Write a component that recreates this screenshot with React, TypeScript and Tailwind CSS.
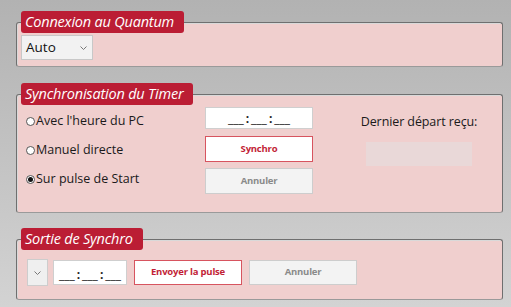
import { ReactNode } from "react";

const font = { fontFamily: '"Open Sans", "Noto Sans", sans-serif' };

function Group({ title, titleWidth, className, children }: { title: string; titleWidth: string; className: string; children: ReactNode }) {
  return (
    <div className={`relative ml-4 w-[487px] rounded-[3px] border border-[#6f6f6f] border-b-[#9a9a9a] bg-[#f0cfce] shadow-[inset_1px_1px_0_#d9d9d9] ${className}`}>
      <div
        className={`absolute -top-[12px] left-[4px] h-[22px] ${titleWidth} whitespace-nowrap rounded-[3px] bg-[#bb1d34] pl-[4px] text-[14.5px] italic leading-[21px] tracking-[-0.2px] text-white`}
      >
        {title}
      </div>
      {children}
    </div>
  );
}

function TimeBox({ className }: { className: string }) {
  return (
    <div className={`flex items-end justify-center border border-[#cfcfcf] bg-white pb-[3px] text-[12px] leading-none text-[#222] ${className}`}>
      <span>___</span>
      <span className="mx-[2px] font-bold">:</span>
      <span>___</span>
      <span className="mx-[2px] font-bold">:</span>
      <span>___</span>
    </div>
  );
}

function Radio({ label, checked }: { label: string; checked?: boolean }) {
  return (
    <div className="flex h-[18px] items-center text-[12.5px] text-[#1a1a1a]">
      <span className="mr-[1px] flex h-[9px] w-[9px] items-center justify-center rounded-full border border-[#555] bg-white">
        {checked && <span className="h-[5px] w-[5px] rounded-full bg-[#111]" />}
      </span>
      {label}
    </div>
  );
}

function Chevron() {
  return (
    <svg width="7" height="4" viewBox="0 0 7 4" className="text-[#777]">
      <path d="M0.5 0.5 L3.5 3.5 L6.5 0.5" fill="none" stroke="currentColor" strokeWidth="1" />
    </svg>
  );
}

export default function App() {
  return (
    <div style={font} className="h-[307px] w-[511px] overflow-hidden bg-gradient-to-b from-[#b2b2b2] to-[#d3d3d3] pt-[22px]">
      <Group title="Connexion au Quantum" titleWidth="w-[163px]" className="h-[45px]">
        <div className="ml-[4px] mt-[12px] flex h-[25px] w-[72px] items-center justify-between border border-[#c8c8c8] bg-[#f2f2f2] pl-[4px] pr-[5px] text-[13.5px] text-[#111]">
          Auto
          <Chevron />
        </div>
      </Group>

      <Group title="Synchronisation du Timer" titleWidth="w-[172px]" className="mt-[27px] h-[119px]">
        <div className="flex">
          <div className="ml-[9px] mt-[17px] flex w-[179px] flex-col gap-[11px]">
            <Radio label="Avec l'heure du PC" />
            <Radio label="Manuel directe" />
            <Radio label="Sur pulse de Start" checked />
          </div>
          <div className="mt-[12px] flex w-[108px] flex-col">
            <TimeBox className="h-[22px] w-[108px]" />
            <div className="mt-[7px] flex h-[26px] items-center justify-center border border-[#d7545f] bg-white text-[9.5px] font-bold tracking-[-0.2px] text-[#c21f37]">
              Synchro
            </div>
            <div className="mt-[6px] flex h-[26px] items-center justify-center border border-[#cdcdcd] bg-[#f3f3f3] text-[9.5px] font-bold tracking-[-0.2px] text-[#8a8a8a]">
              Annuler
            </div>
          </div>
          <div className="ml-[53px] mt-[18px] flex w-[106px] flex-col items-center">
            <div className="whitespace-nowrap text-[12.5px] tracking-[-0.1px] text-[#1a1a1a]">Dernier départ reçu:</div>
            <div className="mt-[10px] h-[24px] w-[106px] bg-[#e9d8d8]" />
          </div>
        </div>
      </Group>

      <Group title="Sortie de Synchro" titleWidth="w-[122px]" className="mt-[26px] h-[61px]">
        <div className="ml-[10px] mt-[19px] flex items-center">
          <div className="flex h-[27px] w-[21px] items-center justify-center border border-[#cdcdcd] bg-[#efefef]">
            <Chevron />
          </div>
          <TimeBox className="ml-[5px] h-[25px] w-[74px]" />
          <div className="ml-[7px] flex h-[25px] w-[108px] items-center justify-center border border-[#d7545f] bg-white text-[9.5px] font-bold tracking-[-0.2px] text-[#c21f37]">
            Envoyer la pulse
          </div>
          <div className="ml-[7px] flex h-[25px] w-[108px] items-center justify-center border border-[#cdcdcd] bg-[#f3f3f3] text-[9.5px] font-bold tracking-[-0.2px] text-[#8a8a8a]">
            Annuler
          </div>
        </div>
      </Group>
    </div>
  );
}
